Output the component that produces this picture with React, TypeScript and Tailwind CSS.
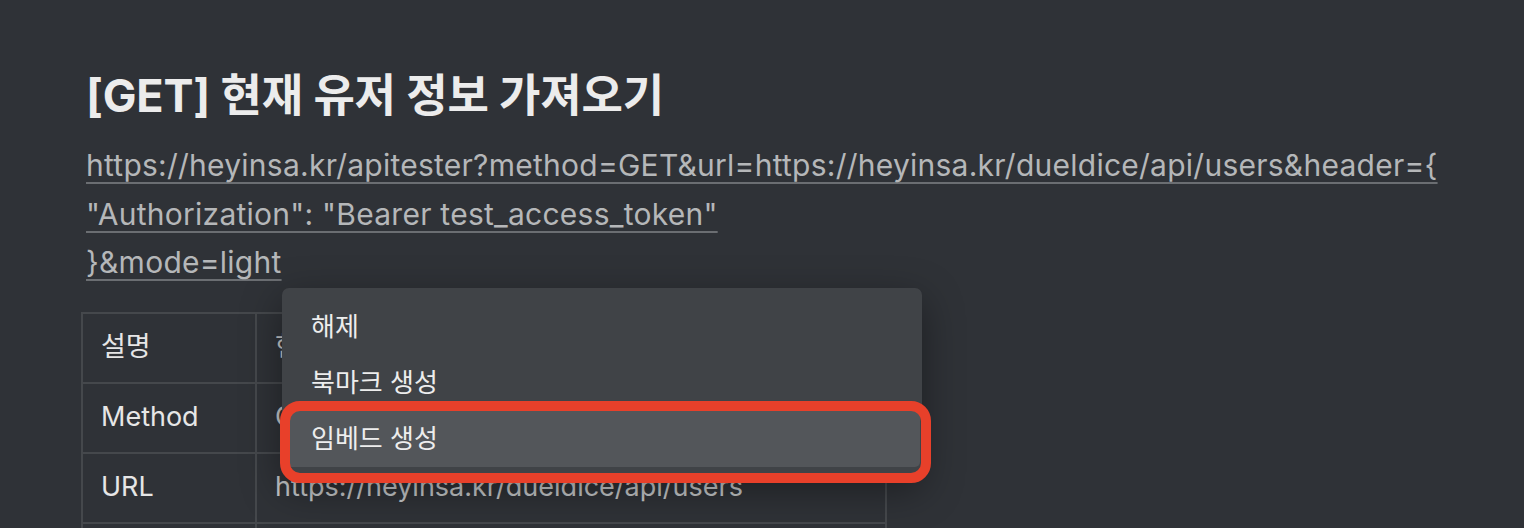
const rows = [
  { label: "설명", value: "현재 유저 정보 가져오기" },
  { label: "Method", value: "GET" },
  { label: "URL", value: "https://heyinsa.kr/dueldice/api/users" },
  { label: "Header", value: "Authorization" },
];

const menuItems = ["해제", "북마크 생성", "임베드 생성"];

export default function App() {
  return (
    <div className="relative h-[528px] w-[1524px] overflow-hidden bg-[#2f3237] font-['Inter','Noto_Sans_CJK_KR',sans-serif]">
      <div className="flex flex-col pl-[86px] pt-[64px]">
        {/* Title */}
        <h1 className="text-[45px] font-bold leading-[64px] tracking-[-0.2px] text-[#ececec]">
          [GET] 현재 유저 정보 가져오기
        </h1>

        {/* Link */}
        <p className="mt-[13px] text-[30px] leading-[48.5px] tracking-[0.25px] text-[#b5b7b9]">
          <span className="underline decoration-[#6b6e72] decoration-2 underline-offset-[6px]">
            https://heyinsa.kr/apitester?method=GET&amp;url=https://heyinsa.kr/dueldice/api/users&amp;header=&#123;
            <br />
            "Authorization": "Bearer test_access_token"
            <br />
            &#125;&amp;mode=light
          </span>
        </p>

        {/* Table */}
        <table className="-ml-[5px] mt-[25px] w-[806px] border-collapse text-[27px] text-[#e6e6e6]">
          <tbody>
            {rows.map((row) => (
              <tr key={row.label} className="h-[70px]">
                <td className="w-[174px] border-2 border-[#45484c] px-[18px]">{row.label}</td>
                <td className="border-2 border-[#45484c] px-[18px] text-[#c4c6c8]">{row.value}</td>
              </tr>
            ))}
          </tbody>
        </table>
      </div>

      {/* Context menu */}
      <div className="absolute left-[282px] top-[288px] w-[640px] rounded-[7px] bg-[#404347] px-[2px] py-[10px] shadow-[0_12px_40px_rgba(0,0,0,0.4)]">
        {menuItems.map((item, i) => (
          <div
            key={item}
            className={
              i === 2
                ? "flex h-[57px] items-center rounded-[5px] bg-[#53565a] px-[27px] text-[26px] text-[#ededed]"
                : "flex h-[56px] items-center rounded-[5px] px-[27px] text-[26px] text-[#ededed]"
            }
          >
            {item}
          </div>
        ))}
      </div>

      {/* Annotation */}
      <div className="absolute left-[280px] top-[401px] h-[82px] w-[651px] rounded-[20px] border-[10px] border-[#e8402a]" />
    </div>
  );
}
